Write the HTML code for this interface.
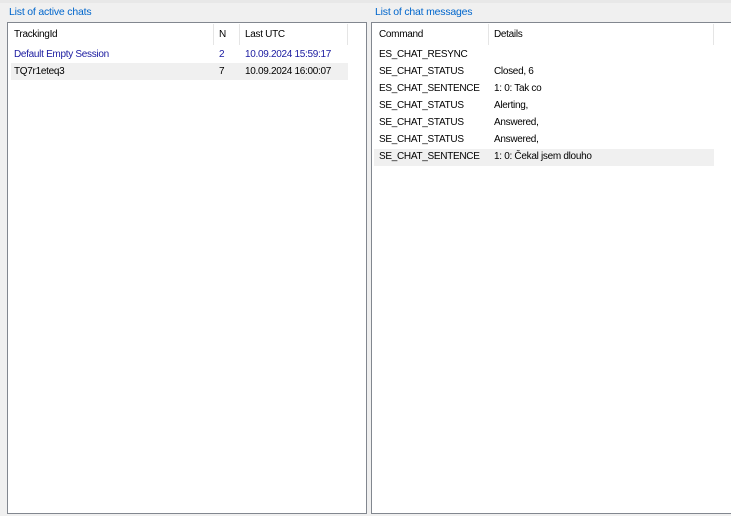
<!DOCTYPE html>
<html><head><style>
body{margin:0;width:731px;height:516px;background:#f0f0f0;font-family:"Liberation Sans",sans-serif;font-size:10px;letter-spacing:-0.3px;color:#000;position:relative;overflow:hidden}
.t{position:absolute;color:#0066cc;font-size:10.5px;top:6px;letter-spacing:-0.2px}
.p{position:absolute;background:#fff;border:1px solid #82878f;box-sizing:border-box}
.a{position:absolute;white-space:nowrap}
.sep{position:absolute;top:1px;width:1px;height:21px;background:#e5e5e5}
.hl{position:absolute;background:#f0f0f0}
</style></head><body>
<div style="position:absolute;left:0;top:0;width:731px;height:3px;background:#e8e8e8"></div>
<div class="t" style="left:9px">List of active chats</div>
<div class="t" style="left:375px">List of chat messages</div>
<div class="p" style="left:7px;top:22px;width:360px;height:492px">
 <div class="a" style="left:6px;top:6px">TrackingId</div>
 <div class="sep" style="left:205px"></div>
 <div class="a" style="left:211px;top:6px">N</div>
 <div class="sep" style="left:231px"></div>
 <div class="a" style="left:237px;top:6px">Last UTC</div>
 <div class="sep" style="left:339px"></div>
 <div class="a" style="left:6px;top:26px;color:#1a1aa0">Default Empty Session</div>
 <div class="a" style="left:211px;top:26px;color:#1a1aa0">2</div>
 <div class="a" style="left:237px;top:26px;color:#1a1aa0">10.09.2024 15:59:17</div>
 <div class="hl" style="left:3px;top:40px;width:337px;height:17px"></div>
 <div class="a" style="left:6px;top:43px">TQ7r1eteq3</div>
 <div class="a" style="left:211px;top:43px">7</div>
 <div class="a" style="left:237px;top:43px">10.09.2024 16:00:07</div>
</div>
<div class="p" style="left:371px;top:22px;width:362px;height:492px">
 <div class="a" style="left:7px;top:6px">Command</div>
 <div class="sep" style="left:116px"></div>
 <div class="a" style="left:122px;top:6px">Details</div>
 <div class="sep" style="left:341px"></div>
 <div class="hl" style="left:2px;top:126px;width:340px;height:17px"></div>
 <div class="a" style="left:7px;top:26px">ES_CHAT_RESYNC</div>
 <div class="a" style="left:7px;top:43px">SE_CHAT_STATUS</div><div class="a" style="left:122px;top:43px">Closed, 6</div>
 <div class="a" style="left:7px;top:60px">ES_CHAT_SENTENCE</div><div class="a" style="left:122px;top:60px">1: 0: Tak co</div>
 <div class="a" style="left:7px;top:77px">SE_CHAT_STATUS</div><div class="a" style="left:122px;top:77px">Alerting,</div>
 <div class="a" style="left:7px;top:94px">SE_CHAT_STATUS</div><div class="a" style="left:122px;top:94px">Answered,</div>
 <div class="a" style="left:7px;top:111px">SE_CHAT_STATUS</div><div class="a" style="left:122px;top:111px">Answered,</div>
 <div class="a" style="left:7px;top:128px">SE_CHAT_SENTENCE</div><div class="a" style="left:122px;top:128px">1: 0: Čekal jsem dlouho</div>
</div>
</body></html>
